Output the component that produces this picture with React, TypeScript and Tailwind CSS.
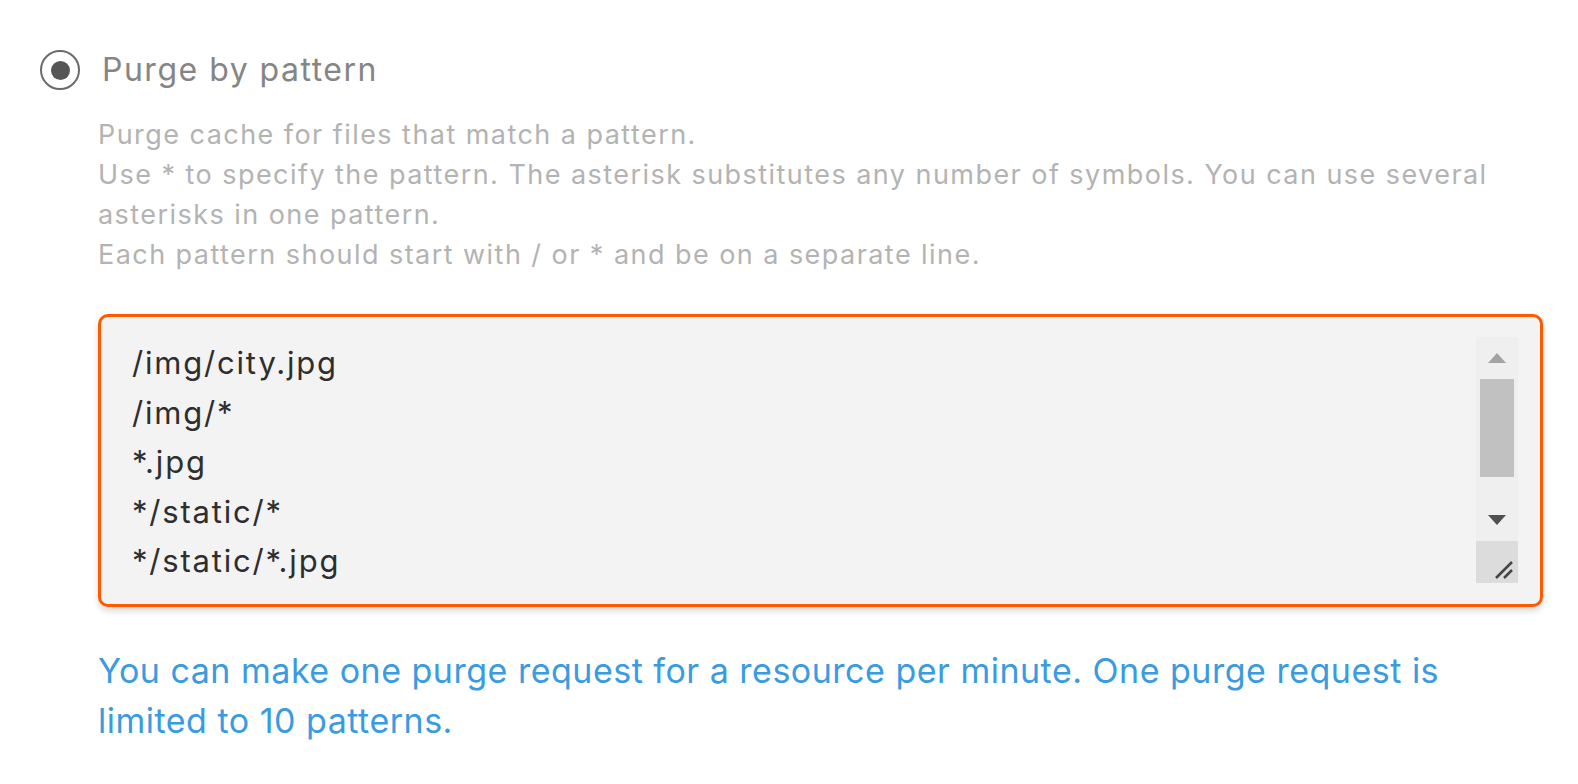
import React from 'react';

const patterns = ['/img/city.jpg', '/img/*', '*.jpg', '*/static/*', '*/static/*.jpg'];

function Scrollbar() {
  return (
    <div className="flex w-[42px] shrink-0 flex-col">
      <div className="flex flex-1 flex-col items-center bg-[#efefef]">
        <div className="flex h-[42px] items-center justify-center">
          <svg width="18" height="10" viewBox="0 0 18 10">
            <path d="M0 10 L9 0 L18 10 Z" fill="#a3a3a3" />
          </svg>
        </div>
        <div className="h-[98px] w-[34px] bg-[#c1c1c1]" />
        <div className="flex-1" />
        <div className="flex h-[42px] items-center justify-center">
          <svg width="18" height="10" viewBox="0 0 18 10">
            <path d="M0 0 L18 0 L9 10 Z" fill="#505050" />
          </svg>
        </div>
      </div>
      <div className="flex h-[42px] items-end justify-end bg-[#dcdcdc] p-[3px]">
        {/* resize grip */}
        <svg width="22" height="22" viewBox="0 0 22 22">
          <path d="M3 20 L19 4" stroke="#444" strokeWidth="2.5" />
          <path d="M11 20 L19 12" stroke="#444" strokeWidth="2.5" />
        </svg>
      </div>
    </div>
  );
}

export default function App() {
  return (
    <div className="min-h-screen bg-white pl-[40px] pt-[49px] font-['Inter','Liberation_Sans',sans-serif]">
      {/* Radio + label */}
      <div className="flex items-center gap-[22px]">
        <div className="flex h-[40px] w-[40px] items-center justify-center rounded-full border-2 border-[#6b6b6b]">
          <div className="h-[19px] w-[19px] rounded-full bg-[#555555]" />
        </div>
        <span className="text-[32px] leading-[42px] tracking-[1.5px] text-[#858585]">Purge by pattern</span>
      </div>

      <div className="ml-[58px] mr-[35px]">
        {/* Description */}
        <div className="mt-[24px] text-[27px] leading-[40px] tracking-[1.45px] text-[#b3b3b3]">
          <p>Purge cache for files that match a pattern.</p>
          <p>
            Use * to specify the pattern. The asterisk substitutes any number of symbols. You can use several
            asterisks in one pattern.
          </p>
          <p>Each pattern should start with / or * and be on a separate line.</p>
        </div>

        {/* Pattern textarea */}
        <div className="mt-[39px] flex h-[293px] rounded-[10px] border-[3px] border-[#ff5a00] bg-[#f3f3f3] pb-[21px] pl-[31px] pr-[22px] pt-[20px] shadow-[0_4px_6px_rgba(0,0,0,0.15)]">
          <div className="flex-1 pt-[1px] text-[31px] leading-[49.5px] tracking-[1.8px] text-[#2e2e2e]">
            {patterns.map((p) => (
              <div key={p}>{p}</div>
            ))}
          </div>
          <Scrollbar />
        </div>

        {/* Note */}
        <p className="mt-[39px] text-[34px] leading-[50px] tracking-[0.5px] text-[#3a9be0]">
          You can make one purge request for a resource per minute. One purge request is limited to 10 patterns.
        </p>
      </div>
    </div>
  );
}
